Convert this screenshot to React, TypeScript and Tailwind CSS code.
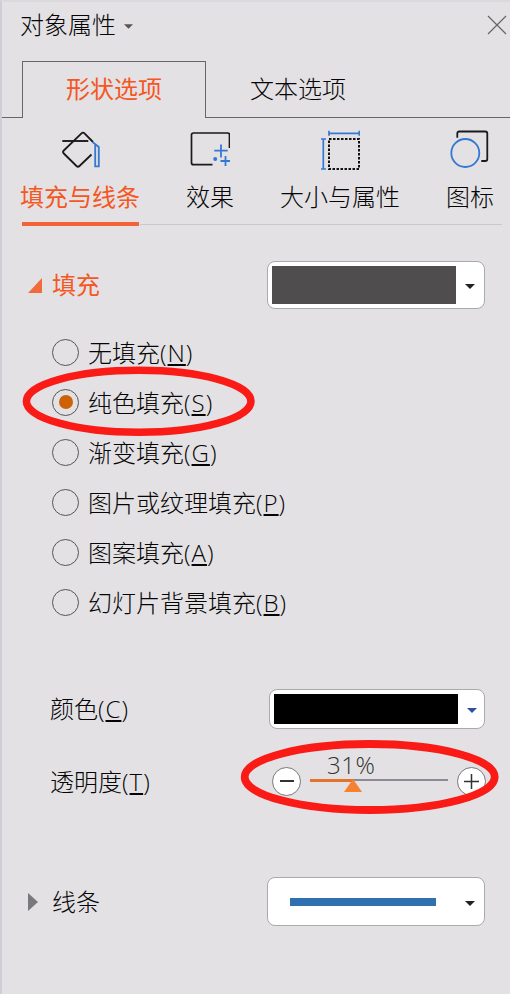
import { ReactNode, useState } from 'react';

const fills = [
  { label: '无填充', hotkey: 'N' },
  { label: '纯色填充', hotkey: 'S' },
  { label: '渐变填充', hotkey: 'G' },
  { label: '图片或纹理填充', hotkey: 'P' },
  { label: '图案填充', hotkey: 'A' },
  { label: '幻灯片背景填充', hotkey: 'B' },
];

function BucketIcon() {
  return (
    <svg width="40" height="40" viewBox="0 0 40 40" fill="none">
      <path
        d="M33 13 L24.5 4.3 Q23 2.8 21.5 4.3 L3.8 21.5 Q2.3 23 3.8 24.5 L16.5 37 Q18 38.4 19.5 37 L31.5 25.5"
        stroke="#1a1a1a"
        strokeWidth="1.8"
      />
      <path d="M2.3 12h26" stroke="#1a1a1a" strokeWidth="1.9" />
      <path d="M32.5 13l6.3 5v19.3h-3.6V15.5" stroke="#3478d4" strokeWidth="1.8" />
    </svg>
  );
}

function EffectIcon() {
  return (
    <svg width="40" height="40" viewBox="0 0 40 40" fill="none">
      <path d="M22.5 35.7H3.5q-2 0-2-2V6q0-2 2-2h34q2 0 2 2v13" stroke="#1a1a1a" strokeWidth="1.7" />
      <path d="M24.3 21.7h13.4M31 15.5v13M30.5 32h9.5M35.5 27v10" stroke="#3478d4" strokeWidth="1.8" />
      <circle cx="25.2" cy="30" r="2" fill="#3478d4" />
    </svg>
  );
}

function SizeIcon() {
  return (
    <svg width="40" height="42" viewBox="0 0 40 42" fill="none" className="-mb-[2px]">
      <path d="M9 4.3h30.3M9 1.8v5M39.3 1.8v5M3.3 10v30M1 10h5M1 40h5" stroke="#3478d4" strokeWidth="1.7" />
      <rect x="9" y="10" width="30" height="30" stroke="#111" strokeWidth="2" strokeDasharray="2.5 1.5" />
    </svg>
  );
}

function ShapeIcon() {
  return (
    <svg width="40" height="40" viewBox="0 0 40 40" fill="none">
      <path d="M7.3 8.7V4.5q0-2 2-2h26q2 0 2 2V30q0 2-2 2h-4" stroke="#1a1a1a" strokeWidth="1.8" />
      <circle cx="15.3" cy="24" r="14" stroke="#3478d4" strokeWidth="1.8" />
    </svg>
  );
}

const tools = [
  { label: '填充与线条', icon: <BucketIcon /> },
  { label: '效果', icon: <EffectIcon /> },
  { label: '大小与属性', icon: <SizeIcon /> },
  { label: '图标', icon: <ShapeIcon /> },
];

function Hotkey({ children }: { children: string }) {
  return (
    <span className="tracking-[1px]">
      (<span className="underline decoration-[1.5px] underline-offset-[2px]">{children}</span>)
    </span>
  );
}

function Caret({ className }: { className: string }) {
  return (
    <svg width="10" height="5" viewBox="0 0 10 5" className={className}>
      <path d="M0 0h10L5 5z" fill="currentColor" />
    </svg>
  );
}

function Select({ className, caret = 'text-[#222]', children }: { className: string; caret?: string; children: ReactNode }) {
  return (
    <button className={`flex items-center justify-between rounded-lg border border-[#aaa9ac] bg-white ${className}`}>
      {children}
      <Caret className={`mt-[3px] ${caret}`} />
    </button>
  );
}

export default function App() {
  const [fill, setFill] = useState('S');
  const [tool, setTool] = useState('填充与线条');
  const [opacity, setOpacity] = useState(31);
  const step = (n: number) => setOpacity((v) => Math.min(100, Math.max(0, v + n)));

  return (
    <div className="h-[994px] w-[510px] overflow-hidden border-t-2 border-l-2 border-t-[#dbd9dd] border-l-[#cfced6] bg-[#e3e1e4] font-['Open_Sans','Noto_Sans_CJK_SC',sans-serif] text-[24px] leading-[30px] font-light text-[#050505]">
      {/* Title bar */}
      <header className="flex h-[59px] items-start justify-between pt-2 pl-[18px]">
        <div className="flex items-center gap-2">
          <span>对象属性</span>
          <Caret className="mt-[2px] w-[9px] text-[#555]" />
        </div>
        <svg width="24" height="30" viewBox="0 0 24 30" stroke="#666" strokeWidth="1.2">
          <path d="M2 6l18 18M20 6L2 24" />
        </svg>
      </header>

      {/* Option tabs */}
      <nav className="flex h-[57px]">
        <div className="w-5 border-b border-[#666]" />
        <div className="w-[184px] border border-b-0 border-[#666] pt-[12px] text-center font-normal text-[#f4571f]">形状选项</div>
        <div className="flex-1 border-b border-[#666] pt-[13px] pl-11">文本选项</div>
      </nav>

      {/* Tool tabs */}
      <div className="flex h-[108px] gap-[46px] pt-[11px] pl-[18px]">
        {tools.map(({ label, icon }) => (
          <button
            key={label}
            onClick={() => setTool(label)}
            className={`flex shrink-0 flex-col items-center ${tool === label ? 'font-normal text-[#f4571f]' : ''}`}
          >
            {icon}
            <span className="mt-[13px] whitespace-nowrap">{label}</span>
            {tool === label && <span className="mt-[10px] h-[4px] w-[117px] shrink-0 bg-[#f26438]" />}
          </button>
        ))}
      </div>
      <div className="-mt-[2px] mr-2 ml-[138px] h-px bg-[#cac8cc]" />

      {/* Fill */}
      <section>
        <div className="mt-9 flex h-12 items-center justify-between pr-[25px] pl-[26px]">
          <div className="flex items-center gap-[10px] font-normal text-[#f4571f]">
            <svg width="14" height="15" viewBox="0 0 14 15">
              <path d="M14 0v15H0z" fill="#f26b3a" />
            </svg>
            填充
          </div>
          <Select className="h-12 w-[218px] pr-[9px] pl-1">
            <span className="h-[38px] w-[184px] bg-[#4f4d4d]" />
          </Select>
        </div>

        <div className="relative mt-[18px] pl-[50px]">
          {fills.map(({ label, hotkey }) => (
            <label key={hotkey} className="flex h-[50px] items-center gap-[9px]">
              <input type="radio" name="fill" className="sr-only" checked={fill === hotkey} onChange={() => setFill(hotkey)} />
              <span className="flex size-[27px] items-center justify-center rounded-full border border-[#555]">
                {fill === hotkey && <span className="size-[14px] rounded-full bg-[#cc6204]" />}
              </span>
              <span className="mt-px">
                {label}
                <Hotkey>{hotkey}</Hotkey>
              </span>
            </label>
          ))}
          <svg width="234" height="72" className="pointer-events-none absolute top-[38px] left-5" fill="none">
            <ellipse cx="116.7" cy="36.3" rx="112.3" ry="31" stroke="#fa1a16" strokeWidth="7.5" />
          </svg>
        </div>
      </section>

      {/* Colour */}
      <div className="mt-[62px] flex h-10 items-center justify-between pr-[25px] pl-12">
        <span>
          颜色<Hotkey>C</Hotkey>
        </span>
        <Select className="h-10 w-[216px] pr-[7px] pl-1" caret="text-[#2f4f9e]">
          <span className="h-[30px] w-[184px] bg-black" />
        </Select>
      </div>

      {/* Transparency */}
      <div className="relative mt-[37px] flex h-[30px] items-center pl-12">
        <span className="mt-px w-[222px]">
          透明度<Hotkey>T</Hotkey>
        </span>
        <button onClick={() => step(-1)} className="flex size-[29px] shrink-0 items-center justify-center rounded-full border border-[#777] bg-white">
          <span className="h-[1.5px] w-[14px] bg-[#333]" />
        </button>
        <div className="relative ml-[9px] h-[30px] w-[138px]">
          <div className="flex h-7 items-center">
            <div className="h-[3px] bg-[#e5722a]" style={{ width: `${opacity}%` }} />
            <div className="h-[1.5px] flex-1 bg-[#8b8a92]" />
          </div>
          <svg width="18" height="13" className="absolute top-[13px] -ml-[9px]" style={{ left: `${opacity}%` }}>
            <path d="M9 0l9 13H0z" fill="#f58232" />
          </svg>
          <span className="absolute -top-4 left-[17px] tracking-[0.5px] text-[#333]">{opacity}%</span>
        </div>
        <button onClick={() => step(1)} className="ml-[9px] flex size-[29px] shrink-0 items-center justify-center rounded-full border border-[#777] bg-white">
          <svg width="15" height="15" stroke="#333" strokeWidth="1.5">
            <path d="M7.5 0v15M0 7.5h15" />
          </svg>
        </button>
        <svg width="260" height="76" className="pointer-events-none absolute -top-[27px] left-[238px]" fill="none">
          <ellipse cx="129.7" cy="38" rx="125" ry="33" stroke="#fa1a16" strokeWidth="7.8" />
        </svg>
      </div>

      {/* Line */}
      <div className="mt-[81px] flex h-[49px] items-center justify-between pr-[25px] pl-[26px]">
        <div className="flex items-center gap-[14px]">
          <svg width="10" height="18" viewBox="0 0 10 18">
            <path d="M0 0l10 9-10 9z" fill="#77797c" />
          </svg>
          线条
        </div>
        <Select className="h-[49px] w-[218px] pr-[9px] pl-[22px]">
          <span className="h-2 w-[146px] bg-[#3070b0]" />
        </Select>
      </div>
    </div>
  );
}
